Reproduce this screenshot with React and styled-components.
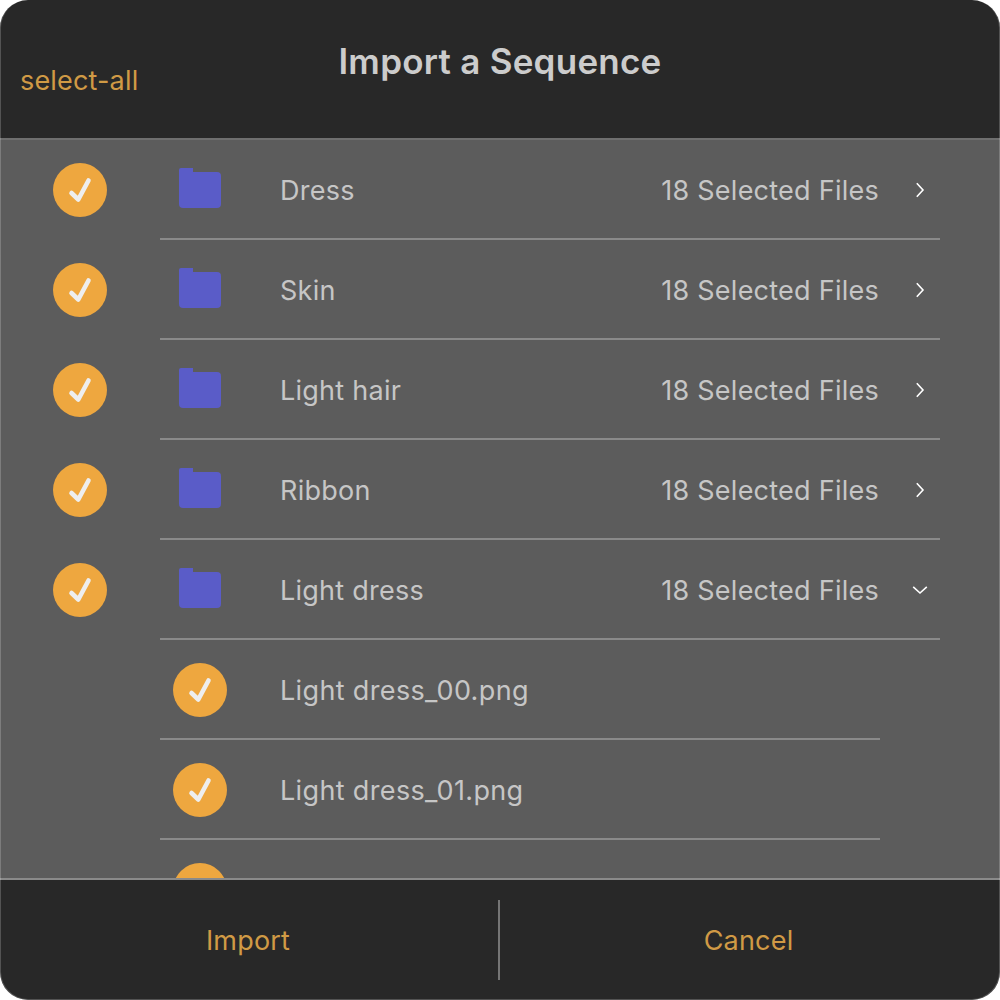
import React from "react";
import styled, { createGlobalStyle } from "styled-components";

const Global = createGlobalStyle`
  html, body { margin: 0; padding: 0; background: #fff; }
  * { box-sizing: border-box; }
`;

const Dialog = styled.div`
  width: 1000px;
  height: 1000px;
  border-radius: 28px;
  overflow: hidden;
  display: flex;
  flex-direction: column;
  background: #282828;
  font-family: Inter, "Liberation Sans", sans-serif;
  position: relative;
  &::after {
    content: "";
    position: absolute;
    inset: 0;
    border: 1px solid rgba(255, 255, 255, 0.2);
    border-top: 0;
    border-radius: inherit;
    pointer-events: none;
  }
`;

const Header = styled.header`
  height: 140px;
  flex: none;
  position: relative;
  border-bottom: 2px solid #6f6f6f;
  display: flex;
  justify-content: center;
`;

const Title = styled.h1`
  margin: 40px 0 0;
  font-size: 35px;
  line-height: 42px;
  font-weight: 600;
  letter-spacing: 0.25px;
  color: #cccccc;
`;

const SelectAll = styled.button`
  position: absolute;
  left: 20px;
  top: 65px;
  padding: 0;
  border: 0;
  background: none;
  font: 400 27px/32px Inter, "Liberation Sans", sans-serif;
  letter-spacing: 0.17px;
  color: #d09a45;
`;

const List = styled.div`
  flex: 1;
  min-height: 0;
  overflow: hidden;
  background: #5c5c5c;
`;

const Row = styled.div`
  display: flex;
  height: 100px;
  padding-left: ${(p) => (p.$child ? "160px" : "0")};
`;

const CheckCell = styled.div`
  width: 160px;
  flex: none;
  display: flex;
  align-items: center;
  justify-content: center;
`;

const Content = styled.div`
  display: flex;
  align-items: center;
  width: ${(p) => (p.$child ? "720px" : "780px")};
  padding-top: 2px;
  border-bottom: 2px solid #8a8a8a;
  font-size: 27px;
  letter-spacing: ${(p) => (p.$child ? "0.35px" : "0.25px")};
  color: #c6c6c6;
`;

const IconCell = styled.div`
  width: 120px;
  padding-right: 40px;
  flex: none;
  display: flex;
  align-items: center;
  justify-content: center;
`;

const Name = styled.span`
  flex: 1;
`;

const ChevronCell = styled.div`
  width: 61px;
  flex: none;
  display: flex;
  align-items: center;
  justify-content: center;
  padding-left: 21px;
`;

const Footer = styled.footer`
  height: 122px;
  flex: none;
  border-top: 2px solid #8a8a8a;
  display: flex;
  align-items: center;
`;

const Action = styled.button`
  flex: 0 0 500px;
  height: 80px;
  padding: 1px 3px 0 0;
  background: none;
  border: 0;
  font: 400 27px/32px Inter, "Liberation Sans", sans-serif;
  letter-spacing: 0.2px;
  color: #d09a45;
  &:first-child {
    padding-right: 2px;
    border-right: 2px solid #757575;
  }
`;

const FolderSvg = styled.svg`
  margin-bottom: 4px;
  display: block;
`;

const CheckSvg = styled.svg`
  display: block;
  flex: none;
`;

const Check = () => (
  <CheckSvg width="56" height="56" viewBox="0 0 56 56" aria-hidden="true">
    <circle cx="28" cy="28" r="27" fill="#eea73f" />
    <path
      d="M19.5 31 L26.3 37.5 L36.5 18.5"
      fill="none"
      stroke="#eeeeee"
      strokeWidth="4.6"
      strokeLinecap="round"
      strokeLinejoin="round"
    />
  </CheckSvg>
);

const Folder = () => (
  <FolderSvg width="42" height="40" viewBox="0 0 42 40" aria-hidden="true">
    <path
      d="M0 2 a2 2 0 0 1 2 -2 H14 V4 H38 a4 4 0 0 1 4 4 V36 a4 4 0 0 1 -4 4 H4 a4 4 0 0 1 -4 -4 Z"
      fill="#5a5cc8"
    />
  </FolderSvg>
);

const Chevron = ({ open }) => (
  <svg width="16" height="16" viewBox="0 0 16 16" aria-hidden="true">
    <path
      d={open ? "M1.2 4.8 L8 11 L14.8 4.8" : "M4.8 1.2 L11 8 L4.8 14.8"}
      fill="none"
      stroke="#ffffff"
      strokeWidth="1.6"
    />
  </svg>
);

const folders = ["Dress", "Skin", "Light hair", "Ribbon", "Light dress"];
const files = ["Light dress_00.png", "Light dress_01.png", "Light dress_02.png"];

export default function App() {
  return (
    <>
      <Global />
      <Dialog>
        <Header>
          <Title>Import a Sequence</Title>
          <SelectAll>select-all</SelectAll>
        </Header>
        <List>
          {folders.map((name, i) => (
            <Row key={name}>
              <CheckCell>
                <Check />
              </CheckCell>
              <Content>
                <IconCell>
                  <Folder />
                </IconCell>
                <Name>{name}</Name>
                <span>18 Selected Files</span>
                <ChevronCell>
                  <Chevron open={i === folders.length - 1} />
                </ChevronCell>
              </Content>
            </Row>
          ))}
          {files.map((name) => (
            <Row $child key={name}>
              <Content $child>
                <IconCell>
                  <Check />
                </IconCell>
                <Name>{name}</Name>
              </Content>
            </Row>
          ))}
        </List>
        <Footer>
          <Action>Import</Action>
          <Action>Cancel</Action>
        </Footer>
      </Dialog>
    </>
  );
}
